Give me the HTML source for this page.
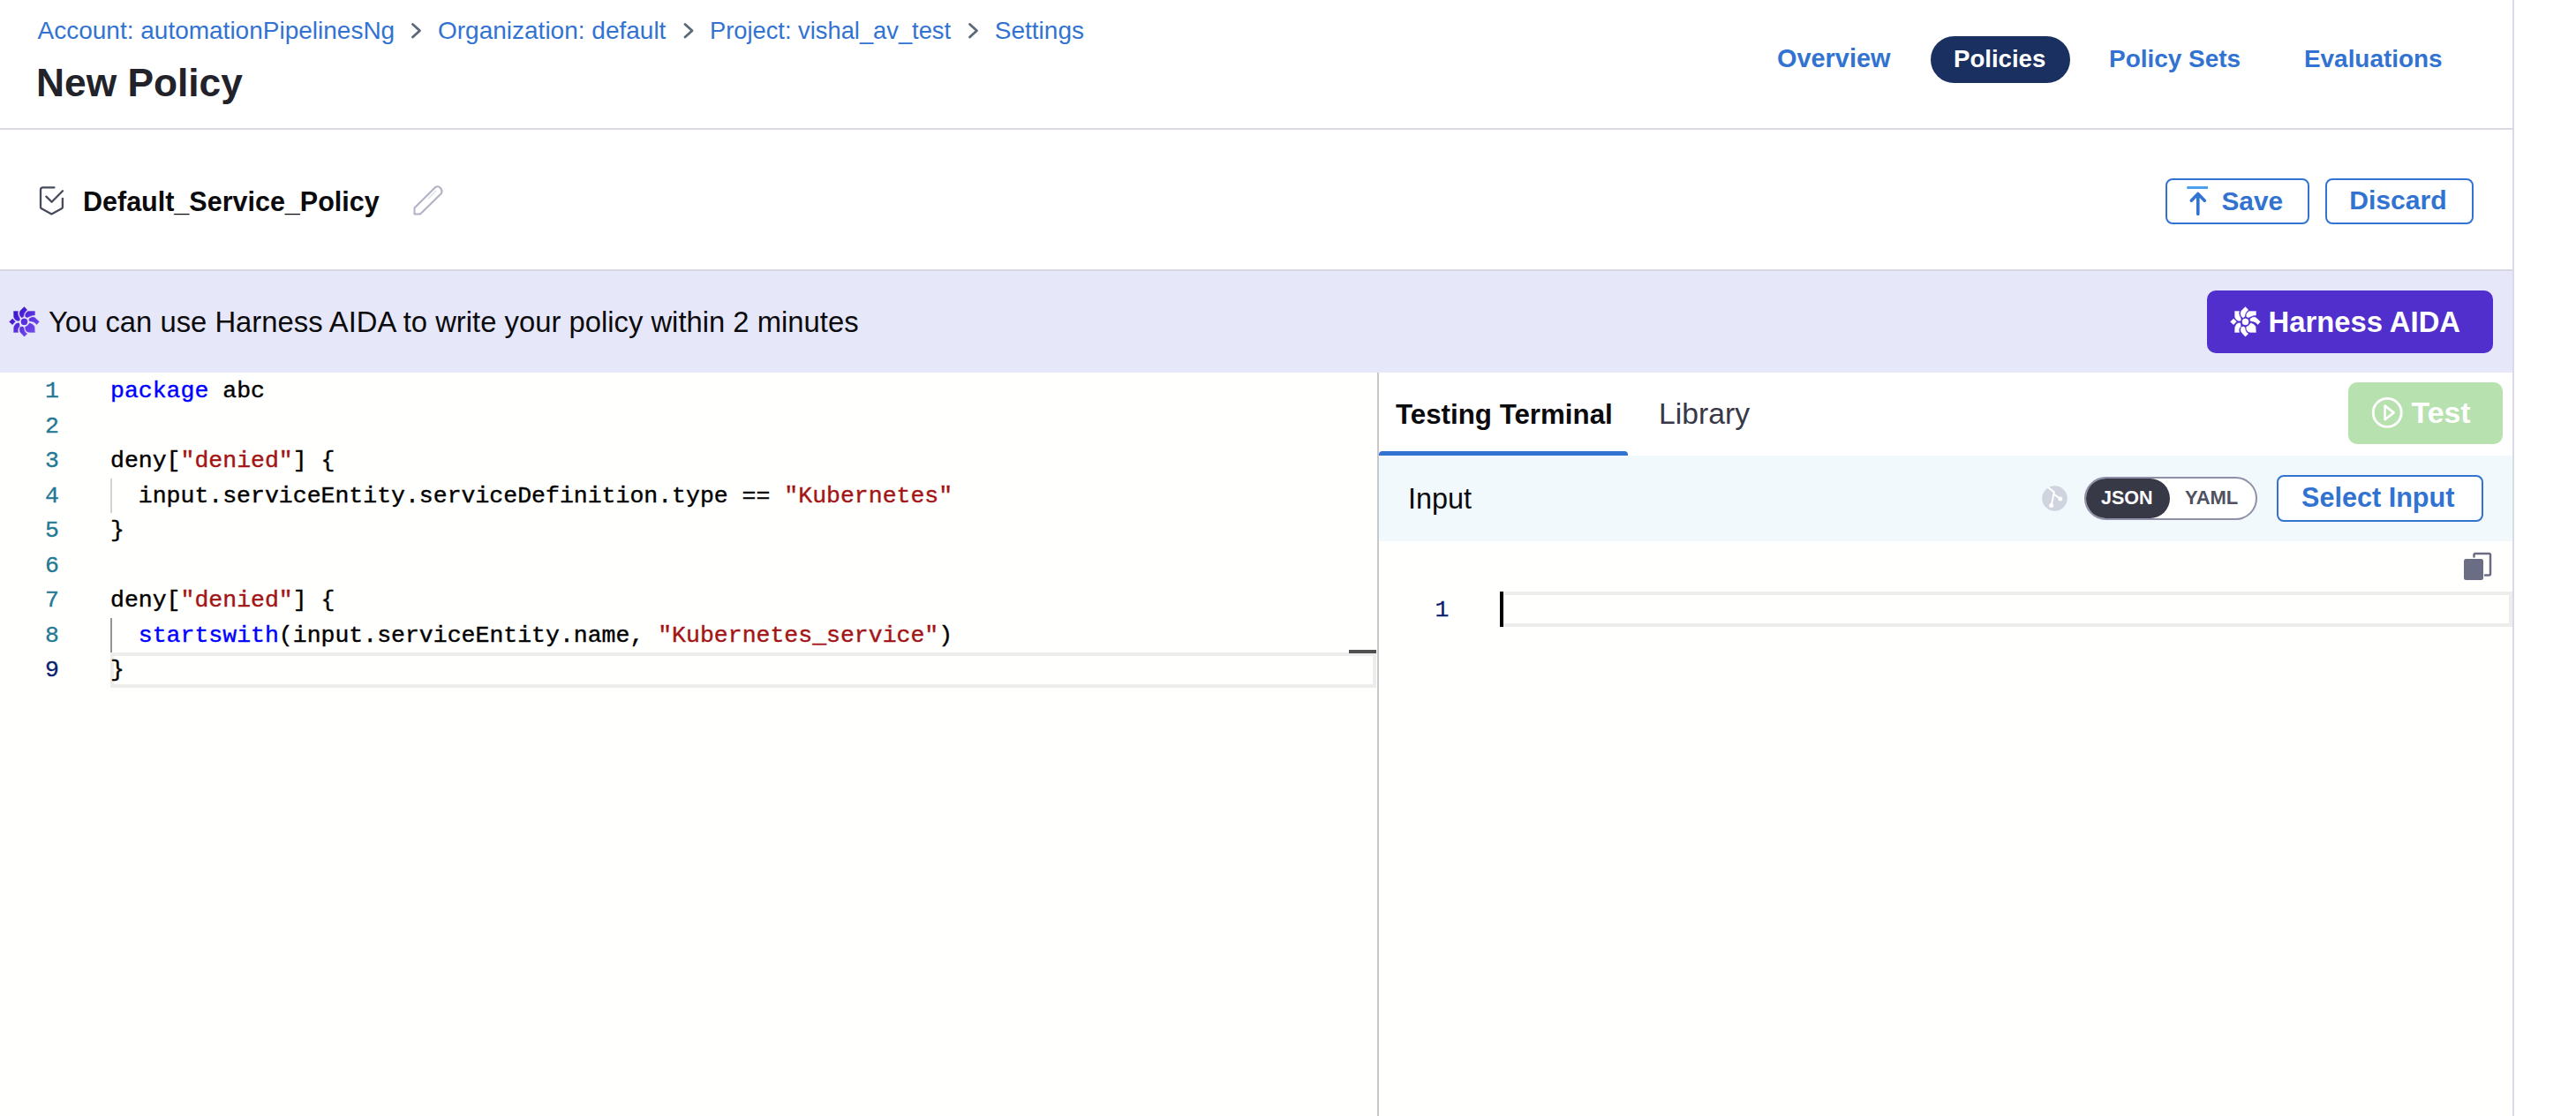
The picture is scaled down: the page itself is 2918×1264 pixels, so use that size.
<!DOCTYPE html>
<html><head><meta charset="utf-8">
<style>
html,body{margin:0;padding:0;}
body{width:2918px;height:1264px;position:relative;overflow:hidden;background:#ffffff;font-family:"Liberation Sans",sans-serif;}
.a{position:absolute;white-space:pre;line-height:1;}
.b{font-weight:bold;}
.blue{color:#3273d1;}
.mono{font-family:"Liberation Mono",monospace;}
svg{position:absolute;overflow:visible;}
</style></head>
<body>
<!-- header -->
<div class="a blue" id="bc1" style="font-size:28px;left:42.5px;top:20.6px;">Account: automationPipelinesNg</div>
<div class="a blue" id="bc2" style="font-size:28px;left:496px;top:20.6px;">Organization: default</div>
<div class="a blue" id="bc3" style="font-size:27.3px;left:804px;top:21.2px;">Project: vishal_av_test</div>
<div class="a blue" id="bc4" style="font-size:28px;left:1126.8px;top:20.6px;">Settings</div>
<svg style="left:0;top:0" width="1" height="1">
  <path d="M467.5 27.5 L475.5 34.8 L467.5 42" fill="none" stroke="#5b6878" stroke-width="2.8" stroke-linecap="round" stroke-linejoin="round"/>
  <path d="M776 27.5 L784 34.8 L776 42" fill="none" stroke="#5b6878" stroke-width="2.8" stroke-linecap="round" stroke-linejoin="round"/>
  <path d="M1098.5 27.5 L1106.5 34.8 L1098.5 42" fill="none" stroke="#5b6878" stroke-width="2.8" stroke-linecap="round" stroke-linejoin="round"/>
</svg>
<div class="a b" id="title" style="font-size:44.3px;left:41px;top:71.8px;color:#22222a;">New Policy</div>

<div class="a b blue" id="t1" style="font-size:28.9px;left:2013px;top:52.4px;">Overview</div>
<div style="position:absolute;left:2187px;top:41px;width:158px;height:53px;border-radius:27px;background:#1a3060;"></div>
<div class="a b" id="t2" style="font-size:27.6px;left:2213px;top:53px;color:#fff;">Policies</div>
<div class="a b blue" id="t3" style="font-size:27.96px;left:2389px;top:53px;">Policy Sets</div>
<div class="a b blue" id="t4" style="font-size:27.9px;left:2610px;top:53px;">Evaluations</div>

<div style="position:absolute;left:0;top:145px;width:2846px;height:2px;background:#d9dae5;"></div>
<div style="position:absolute;left:2846px;top:0;width:2px;height:1264px;background:#d9dae5;"></div>

<!-- policy name row -->
<svg style="left:0;top:0" width="1" height="1">
  <path d="M61.4 212.4 L48.6 212.4 Q46 212.4 46 215 L46 234.4 Q46 235.6 47.1 236.2 L58.4 242.4 L69.8 236.2 Q70.9 235.6 70.9 234.4 L70.9 224.8" fill="none" stroke="#474a5a" stroke-width="2.3" stroke-linejoin="round" stroke-linecap="round"/>
  <path d="M52.4 222.6 L58.6 228.8 L71 216.3" fill="none" stroke="#474a5a" stroke-width="2.3" stroke-linejoin="round" stroke-linecap="round"/>
</svg>
<div class="a b" id="pname" style="font-size:30.5px;left:94px;top:213px;color:#0b0b0d;">Default_Service_Policy</div>
<svg style="left:0;top:0" width="1" height="1">
  <path d="M469.5 242.5 L469.5 235.5 L493.5 211.8 Q496.5 210.5 499 213 Q501.5 216 500 219 L476 242.5 Z" fill="none" stroke="#b0b1c4" stroke-width="2" stroke-linejoin="round"/>
  <path d="M485 225 L494 216" fill="none" stroke="#dcdde6" stroke-width="1.2"/>
</svg>

<div style="position:absolute;left:2453px;top:202px;width:159px;height:47.5px;border:2px solid #3273d1;border-radius:8px;"></div>
<svg style="left:0;top:0" width="1" height="1">
  <rect x="2477.3" y="211" width="23.7" height="3" fill="#4a9ff0"/>
  <path d="M2482.3 227.2 L2489.8 219.5 L2497.3 227.2 M2489.8 220 L2489.8 242.5" fill="none" stroke="#3273d1" stroke-width="3.6" stroke-linecap="round" stroke-linejoin="round"/>
</svg>
<div class="a b blue" id="save" style="font-size:29.8px;left:2516.5px;top:212.6px;">Save</div>
<div style="position:absolute;left:2634px;top:202px;width:163.5px;height:47.5px;border:2px solid #3273d1;border-radius:8px;"></div>
<div class="a b blue" id="discard" style="font-size:30.1px;left:2661.2px;top:212.3px;">Discard</div>

<!-- banner -->
<div style="position:absolute;left:0;top:305px;width:2846px;height:2px;background:#d6d7e1;"></div>
<div style="position:absolute;left:0;top:307px;width:2846px;height:115px;background:#e7e7fa;"></div>
<svg id="aida1" style="left:6px;top:343px" width="44" height="44" viewBox="0 0 1116 1116">
  <defs><linearGradient id="ag" gradientUnits="userSpaceOnUse" x1="150" y1="150" x2="950" y2="950"><stop offset="0" stop-color="#3308c8"/><stop offset="1" stop-color="#7f56f4"/></linearGradient></defs>
  <g fill="url(#ag)" stroke="url(#ag)" stroke-width="8" stroke-linejoin="round">
    <circle cx="545" cy="545" r="92"/>
    <path d="M545 115 L630 200 L575 262 L540 325 L525 400 L470 432 L420 372 L405 300 L425 235 L460 198 Z"/>
    <path d="M240 240 L370 240 L358 300 L375 370 L412 440 L418 500 L385 522 L330 512 L272 472 L243 410 Z"/>
    <path d="M650 242 L850 240 L850 355 L780 362 L700 392 L630 425 L578 400 L570 340 L600 285 Z"/>
    <path d="M975 545 L900 625 L850 572 L780 537 L700 527 L678 500 L690 450 L760 410 L830 415 L885 455 Z"/>
    <path d="M700 580 L790 620 L840 680 L850 850 L690 850 L620 830 L578 772 L572 690 L640 652 Z"/>
    <path d="M545 970 L630 885 L575 845 L545 780 L535 715 L505 682 L430 690 L408 760 L420 830 L462 882 Z"/>
    <path d="M240 850 L370 850 L360 780 L375 720 L405 690 L412 640 L398 580 L335 582 L282 622 L245 700 Z"/>
    <path d="M115 545 L205 455 L290 540 L205 630 Z"/>
  </g>
</svg>
<div class="a" id="banner" style="font-size:32.8px;left:55px;top:349px;color:#0b0b0d;">You can use Harness AIDA to write your policy within 2 minutes</div>
<div style="position:absolute;left:2500px;top:329px;width:324px;height:71px;border-radius:10px;background:#512fcd;"></div>
<svg id="aida2" style="left:2522px;top:343px" width="44" height="44" viewBox="0 0 1116 1116">
  <g fill="#ffffff" stroke="#ffffff" stroke-width="8" stroke-linejoin="round">
    <circle cx="545" cy="545" r="92"/>
    <path d="M545 115 L630 200 L575 262 L540 325 L525 400 L470 432 L420 372 L405 300 L425 235 L460 198 Z"/>
    <path d="M240 240 L370 240 L358 300 L375 370 L412 440 L418 500 L385 522 L330 512 L272 472 L243 410 Z"/>
    <path d="M650 242 L850 240 L850 355 L780 362 L700 392 L630 425 L578 400 L570 340 L600 285 Z"/>
    <path d="M975 545 L900 625 L850 572 L780 537 L700 527 L678 500 L690 450 L760 410 L830 415 L885 455 Z"/>
    <path d="M700 580 L790 620 L840 680 L850 850 L690 850 L620 830 L578 772 L572 690 L640 652 Z"/>
    <path d="M545 970 L630 885 L575 845 L545 780 L535 715 L505 682 L430 690 L408 760 L420 830 L462 882 Z"/>
    <path d="M240 850 L370 850 L360 780 L375 720 L405 690 L412 640 L398 580 L335 582 L282 622 L245 700 Z"/>
    <path d="M115 545 L205 455 L290 540 L205 630 Z"/>
  </g>
</svg>
<div class="a b" id="aidabtn" style="font-size:32.8px;left:2569.5px;top:348.8px;color:#fff;">Harness AIDA</div>

<!-- left editor -->
<div style="position:absolute;left:0;top:422px;width:1560px;height:842px;background:#fffffe;"></div>
<div id="editor" style="position:absolute;left:0;top:423px;width:1560px;">
<style>.ln{position:absolute;left:0;width:67px;text-align:right;color:#237893;font-family:"Liberation Mono",monospace;font-size:26.5px;line-height:39.5px;white-space:pre;-webkit-text-stroke:0.3px currentColor;}
.cd{position:absolute;left:125px;color:#000;font-family:"Liberation Mono",monospace;font-size:26.5px;line-height:39.5px;white-space:pre;-webkit-text-stroke:0.4px currentColor;}
.kw{color:#0000ff;}.st{color:#a31515;}</style>
<div style="position:absolute;left:125px;top:316.0px;width:1426px;height:31.5px;border:4px solid #ededed;"></div>
<div style="position:absolute;left:125px;top:118.5px;width:2px;height:39.5px;background:#d3d3d3;"></div>
<div style="position:absolute;left:125px;top:276.5px;width:2px;height:39.5px;background:#939393;"></div>
<div style="position:absolute;left:1528px;top:313px;width:31px;height:4px;background:#505050;"></div>
<div class="ln" style="top:1.0px;color:#237893">1</div>
<div class="cd" style="top:1.0px"><span class="kw">package</span> abc</div>
<div class="ln" style="top:40.5px;color:#237893">2</div>
<div class="ln" style="top:80.0px;color:#237893">3</div>
<div class="cd" style="top:80.0px">deny[<span class="st">"denied"</span>] {</div>
<div class="ln" style="top:119.5px;color:#237893">4</div>
<div class="cd" style="top:119.5px">  input.serviceEntity.serviceDefinition.type == <span class="st">"Kubernetes"</span></div>
<div class="ln" style="top:159.0px;color:#237893">5</div>
<div class="cd" style="top:159.0px">}</div>
<div class="ln" style="top:198.5px;color:#237893">6</div>
<div class="ln" style="top:238.0px;color:#237893">7</div>
<div class="cd" style="top:238.0px">deny[<span class="st">"denied"</span>] {</div>
<div class="ln" style="top:277.5px;color:#237893">8</div>
<div class="cd" style="top:277.5px">  <span class="kw">startswith</span>(input.serviceEntity.name, <span class="st">"Kubernetes_service"</span>)</div>
<div class="ln" style="top:317.0px;color:#0b216f">9</div>
<div class="cd" style="top:317.0px">}</div>
</div>
<div style="position:absolute;left:1560px;top:422px;width:2px;height:842px;background:#c8c8c8;"></div>

<!-- right panel -->
<div style="position:absolute;left:1562px;top:422px;width:1284px;height:842px;background:#ffffff;"></div>
<div class="a b" id="tt" style="font-size:31.3px;left:1581px;top:454.2px;color:#0b0b0d;">Testing Terminal</div>
<div class="a" id="lib" style="font-size:33.7px;left:1879px;top:452px;color:#383946;">Library</div>
<div style="position:absolute;left:1562px;top:511px;width:282px;height:5px;background:#3273d1;border-radius:4px 4px 0 0;"></div>
<div style="position:absolute;left:2660px;top:433px;width:175px;height:70px;border-radius:10px;background:#b8e1b0;"></div>
<svg style="left:0;top:0" width="1" height="1">
  <circle cx="2704.2" cy="467.4" r="16" fill="none" stroke="#ffffff" stroke-width="2.8"/>
  <path d="M2701.6 459.6 L2711.6 467.4 L2701.6 475.2 Z" fill="none" stroke="#ffffff" stroke-width="2.6" stroke-linejoin="round"/>
</svg>
<div class="a b" id="test" style="font-size:33.8px;left:2731.5px;top:451px;color:#fff;">Test</div>

<div style="position:absolute;left:1562px;top:516px;width:1284px;height:97px;background:#f1f9fd;"></div>
<div class="a" id="input" style="font-size:32.4px;left:1595px;top:548.5px;color:#0b0b0d;">Input</div>
<svg style="left:0;top:0" width="1" height="1">
  <circle cx="2327.5" cy="564.5" r="14.3" fill="#d0d4de"/>
  <path d="M2319.5 551.5 L2326.8 557.5 L2323.8 572.2 M2327 560 L2333.8 565" fill="none" stroke="#ffffff" stroke-width="2"/>
  <circle cx="2323.6" cy="572.6" r="2.5" fill="#ffffff"/>
  <circle cx="2333.8" cy="565.1" r="2.5" fill="#ffffff"/>
</svg>
<div style="position:absolute;left:2361px;top:540px;width:192px;height:45px;border:2px solid #8f90a8;border-radius:25px;background:#ffffff;"></div>
<div style="position:absolute;left:2362.5px;top:542px;width:95.5px;height:45px;border-radius:23px;background:#383946;"></div>
<div class="a b" id="json" style="font-size:21.5px;left:2380px;top:554px;color:#fff;">JSON</div>
<div class="a b" id="yaml" style="font-size:22px;left:2475px;top:553px;color:#4f5162;">YAML</div>
<div style="position:absolute;left:2579px;top:538px;width:230px;height:48.5px;border:2px solid #3273d1;border-radius:8px;background:#fff;"></div>
<div class="a b blue" id="sel" style="font-size:30.6px;left:2607px;top:548px;">Select Input</div>

<div style="position:absolute;left:1562px;top:613px;width:1284px;height:651px;background:#fffffe;"></div>
<svg style="left:0;top:0" width="1" height="1">
  <path d="M2802.5 630.5 L2802.5 628.5 Q2802.5 627 2804 627 L2819.5 627 Q2821 627 2821 628.5 L2821 650 Q2821 651.5 2819.5 651.5 L2815 651.5" fill="none" stroke="#6b6d85" stroke-width="2.5" stroke-linecap="round"/>
  <rect x="2791" y="633" width="22" height="24" rx="2.5" fill="#6b6d85"/>
</svg>

<div class="ln" style="top:671.5px;left:1571.5px;width:70px;color:#0b216f;">1</div>
<div style="position:absolute;left:1703px;top:670px;width:1139px;height:32px;border:4px solid #ededed;border-left:none;"></div>
<div style="position:absolute;left:1699px;top:670px;width:4px;height:40px;background:#000;"></div>

</body></html>
